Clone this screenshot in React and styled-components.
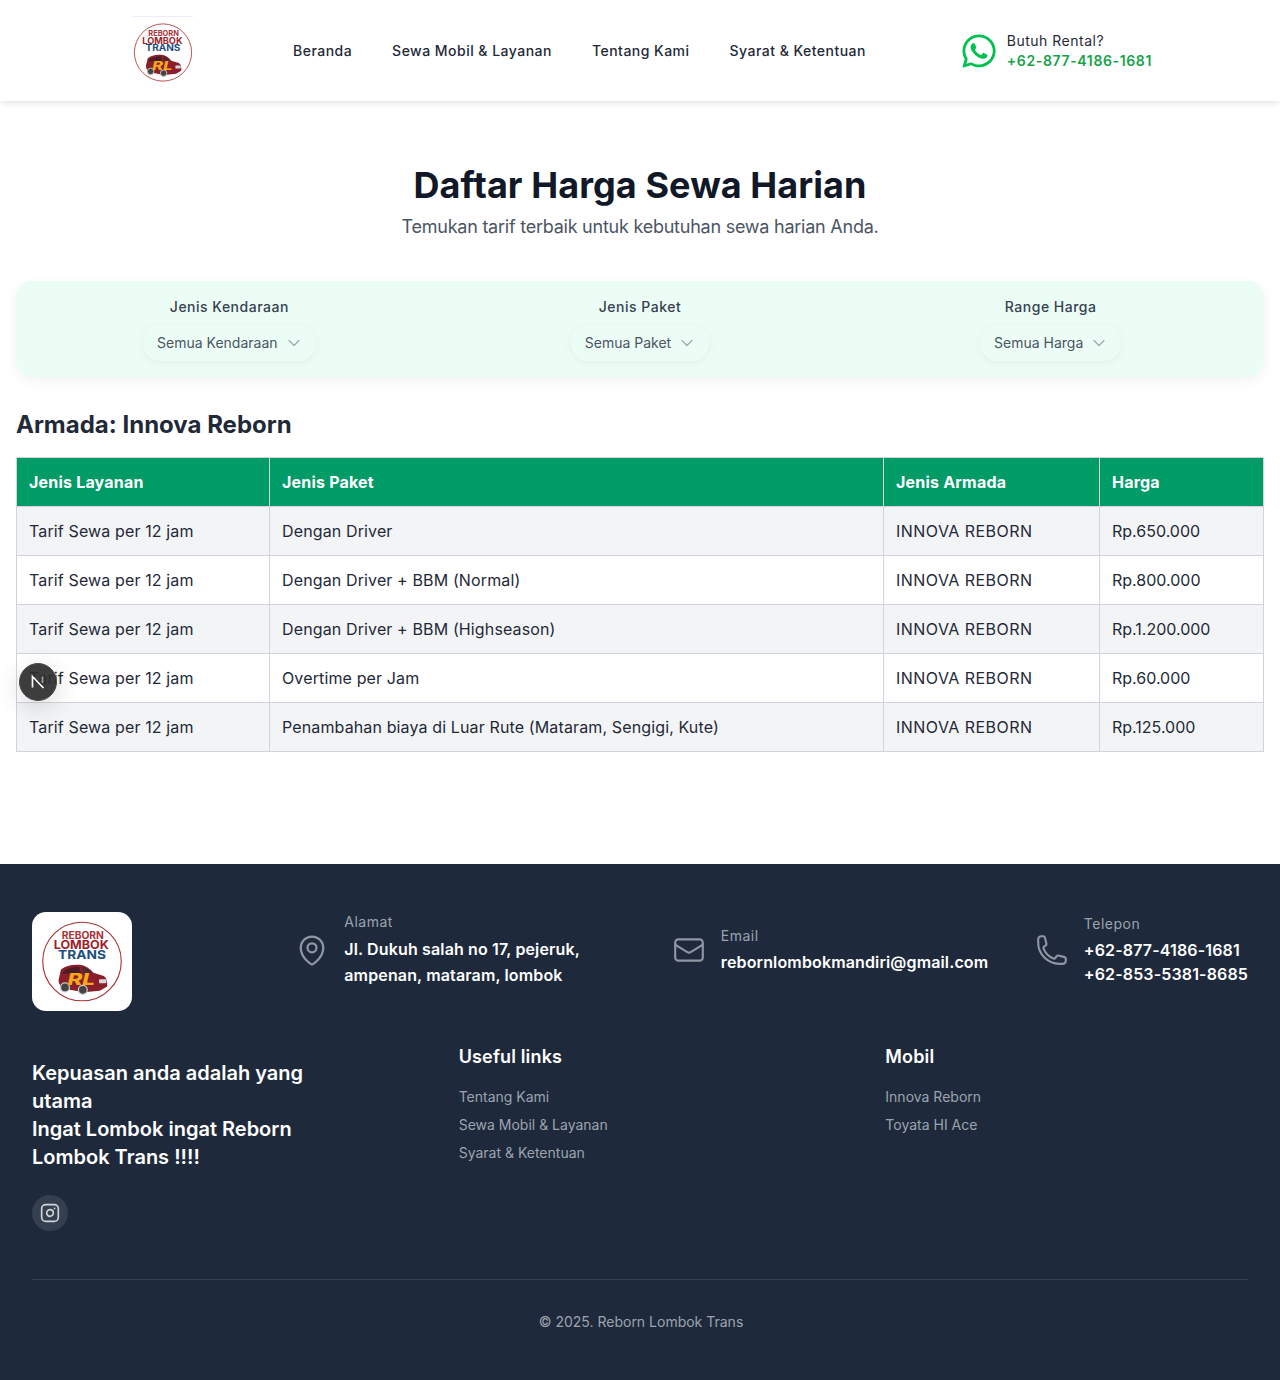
import React from 'react';
import styled, { createGlobalStyle } from 'styled-components';
import { ChevronDown, Instagram } from 'lucide-react';
import { FaWhatsapp } from 'react-icons/fa';
import { HiOutlineMapPin, HiOutlineEnvelope, HiOutlinePhone } from 'react-icons/hi2';

const GlobalStyle = createGlobalStyle`
    * { box-sizing: border-box; }
    body {
        margin: 0;
        font-family: Inter, "Noto Sans", sans-serif;
        background: #fff;
        color: #1f2937;
    }
`;

const Page = styled.div`
    position: relative;
    width: 100%;
`;

// header
const Header = styled.header`
    height: 101px;
    background: #fff;
    box-shadow: 0 4px 6px -1px rgba(0,0,0,.08), 0 2px 4px -2px rgba(0,0,0,.06);
    display: flex;
    align-items: center;
    padding: 0 128px 0 133px;
`;
const HeaderLogo = styled.div`
    width: 60px;
    height: 66px;
    margin-top: -3px;
    border-top: 1px solid #ebebfa;
    padding-top: 6px;
`;
const Nav = styled.nav`
    display: flex;
    gap: 40px;
    margin-left: 100px;
    flex: 1;
`;
const NavLink = styled.a`
    font-size: 14px;
    font-weight: 500;
    letter-spacing: .48px;
    color: #1f2937;
`;
const CallBox = styled.div`
    display: flex;
    align-items: center;
    gap: 9px;
    svg { color: #00c04f; }
`;
const CallText = styled.div`
    display: flex;
    flex-direction: column;
`;
const CallLabel = styled.span`
    font-size: 14px;
    line-height: 20px;
    letter-spacing: .5px;
    color: #1f2937;
`;
const CallNumber = styled.span`
    font-size: 14px;
    line-height: 20px;
    font-weight: 600;
    letter-spacing: .63px;
    color: #16a34a;
`;

// main
const Main = styled.main`
    padding: 64px 16px 112px;
`;
const Title = styled.h1`
    margin: 0;
    text-align: center;
    font-size: 36px;
    line-height: 40px;
    font-weight: 700;
    letter-spacing: .08px;
    color: #111827;
`;
const Subtitle = styled.p`
    margin: 8px 0 0;
    text-align: center;
    font-size: 18px;
    line-height: 28px;
    letter-spacing: -.24px;
    color: #4b5563;
`;
const FilterPanel = styled.section`
    margin-top: 40px;
    height: 96px;
    padding: 16px;
    display: grid;
    grid-template-columns: repeat(3, 1fr);
    gap: 16px;
    background: #ecfdf5;
    border-radius: 16px;
    box-shadow: 0 4px 12px rgba(0,0,0,.05);
`;
const FilterGroup = styled.div`
    display: flex;
    flex-direction: column;
    align-items: center;
`;
const FilterLabel = styled.label`
    font-size: 14px;
    line-height: 20px;
    font-weight: 500;
    letter-spacing: .5px;
    color: #374151;
`;
const FilterSelect = styled.div`
    margin-top: 8px;
    height: 36px;
    padding: 0 12px 1px 14px;
    display: flex;
    align-items: center;
    gap: 6px;
    border-radius: 18px;
    background: #ecfdf5;
    font-size: 14px;
    color: #4b5563;
    box-shadow: 0 2px 8px rgba(0,0,0,.05);
    svg { color: #a3aab5; }
`;
const SectionTitle = styled.h2`
    margin: 32px 0 16px;
    font-size: 24px;
    line-height: 32px;
    font-weight: 700;
    color: #1f2937;
`;
const PriceTable = styled.table`
    width: calc(100% - 1px);
    table-layout: fixed;
    border-collapse: collapse;
    font-size: 16px;
`;
const Th = styled.th`
    height: 49px;
    padding: 0 12px;
    text-align: left;
    font-weight: 700;
    letter-spacing: .2px;
    color: #fff;
    background: #019b68;
    border: 1px solid #d1d5db;
`;
const Td = styled.td`
    height: 49px;
    padding: 0 12px;
    letter-spacing: ${props => props.$spacing ?? .13}px;
    color: #1f2937;
    border: 1px solid #d1d5db;
`;
const Tr = styled.tr`
    background: ${props => props.$shaded ? '#f3f4f6' : '#fff'};
`;

// dev tools badge
const DevBadge = styled.div`
    position: absolute;
    left: 19px;
    top: 663px;
    width: 38px;
    height: 38px;
    display: flex;
    align-items: center;
    justify-content: center;
    border-radius: 50%;
    background: rgba(45,45,45,.92);
    border: 1px solid #4a4a4a;
    box-shadow: 0 6px 24px rgba(0,0,0,.15);
`;

// footer
const Footer = styled.footer`
    height: 516px;
    padding: 48px 32px 0;
    background: #1e2a3b;
`;
const FooterTop = styled.div`
    display: flex;
    align-items: flex-start;
`;
const FooterLogoWrap = styled.div`
    flex: 1;
`;
const FooterLogo = styled.div`
    width: 100px;
    height: 99px;
    padding: 9px;
    background: #fff;
    border-radius: 14px;
`;
const Contacts = styled.div`
    display: flex;
    align-items: center;
    gap: 46.5px;
    height: 76px;
`;
const Contact = styled.div`
    display: flex;
    align-items: center;
    gap: ${props => props.$gap || 15}px;
    svg { color: #8f96a3; flex-shrink: 0; }
`;
const ContactLabel = styled.div`
    font-size: 14px;
    line-height: 20px;
    letter-spacing: .5px;
    color: #9ca3af;
    margin-bottom: ${props => props.$gap || 3}px;
`;
const ContactValue = styled.div`
    width: ${props => props.$width || 'auto'};
    font-size: 16px;
    line-height: ${props => props.$line || 26}px;
    font-weight: 600;
    letter-spacing: .14px;
    color: #fff;
`;
const FooterGrid = styled.div`
    margin-top: 32px;
    display: grid;
    grid-template-columns: repeat(3, 1fr);
    column-gap: 64px;
    height: 237px;
    border-bottom: 1px solid rgba(255,255,255,.1);
`;
const Tagline = styled.p`
    margin: 16px 0 0;
    width: 290px;
    font-size: 20px;
    line-height: 28px;
    font-weight: 600;
    color: #fff;
`;
const SocialLink = styled.a`
    margin-top: 24px;
    width: 36px;
    height: 36px;
    display: flex;
    align-items: center;
    justify-content: center;
    border-radius: 50%;
    background: rgba(255,255,255,.1);
    color: #d1d5db;
`;
const LinkTitle = styled.h4`
    margin: 0 0 12px;
    font-size: 18px;
    line-height: 28px;
    font-weight: 600;
    letter-spacing: .15px;
    color: #fff;
`;
const FooterLink = styled.a`
    display: block;
    font-size: 14px;
    line-height: 28px;
    color: #9ca3af;
`;
const Copyright = styled.p`
    margin: 32px 0 0;
    padding-left: 2px;
    text-align: center;
    font-size: 14px;
    line-height: 20px;
    color: #9ca3af;
`;

const rows = [
    ['Dengan Driver', 'Rp.650.000'],
    ['Dengan Driver + BBM (Normal)', 'Rp.800.000'],
    ['Dengan Driver + BBM (Highseason)', 'Rp.1.200.000'],
    ['Overtime per Jam', 'Rp.60.000'],
    ['Penambahan biaya di Luar Rute (Mataram, Sengigi, Kute)', 'Rp.125.000'],
];

const filters = [
    ['Jenis Kendaraan', 'Semua Kendaraan'],
    ['Jenis Paket', 'Semua Paket'],
    ['Range Harga', 'Semua Harga'],
];

// round company badge, drawn because there is no image file
const Logo = () => (
    <svg viewBox="0 0 100 100" width="100%" height="100%">
        <circle cx="50" cy="50" r="48.5" fill="#fff" stroke="#a83236" strokeWidth="1.4" />
        <g fontFamily="Inter, sans-serif" textAnchor="middle" fontWeight="700">
            <text x="51" y="22.5" fontSize="12.5" textLength="52" lengthAdjust="spacingAndGlyphs" fill="#a8323a">REBORN</text>
            <text x="49" y="35" fontSize="15" textLength="68" lengthAdjust="spacingAndGlyphs" fill="#9e1f2a">LOMBOK</text>
            <text x="50" y="47.5" fontSize="15" textLength="59" lengthAdjust="spacingAndGlyphs" fill="#1d4f80">TRANS</text>
        </g>
        <path d="M21 73 L24 60 Q32 53 47 54 Q57 55 64 64 L77 68 Q82 72 81 81 L72 86 L52 88 L30 84 Q21 81 21 73Z" fill="#8a1f2b" />
        <path d="M28 61 Q37 56 46 56.5 L49 64 L26 65Z" fill="#4a1c24" />
        <path d="M50 56.5 Q57 58 62 64.5 L52 64.5Z" fill="#4a2a30" />
        <rect x="71" y="72" width="9" height="5" rx="1" fill="#d8d8d8" />
        <circle cx="29" cy="82" r="5.5" fill="#444" stroke="#c8c8c8" strokeWidth="1.6" />
        <circle cx="51" cy="85" r="5.5" fill="#444" stroke="#c8c8c8" strokeWidth="1.6" />
        <text x="49" y="79" fontFamily="Inter, sans-serif" fontStyle="italic" fontWeight="800" fontSize="19" textAnchor="middle" textLength="34" lengthAdjust="spacingAndGlyphs" fill="#f6a81c">RL</text>
    </svg>
);

const App = () => {
    return (
        <Page>
            <GlobalStyle />
            <Header>
                <HeaderLogo><Logo /></HeaderLogo>
                <Nav>
                    <NavLink>Beranda</NavLink>
                    <NavLink>Sewa Mobil &amp; Layanan</NavLink>
                    <NavLink>Tentang Kami</NavLink>
                    <NavLink>Syarat &amp; Ketentuan</NavLink>
                </Nav>
                <CallBox>
                    <FaWhatsapp size={38} />
                    <CallText>
                        <CallLabel>Butuh Rental?</CallLabel>
                        <CallNumber>+62-877-4186-1681</CallNumber>
                    </CallText>
                </CallBox>
            </Header>

            <Main>
                <Title>Daftar Harga Sewa Harian</Title>
                <Subtitle>Temukan tarif terbaik untuk kebutuhan sewa harian Anda.</Subtitle>

                <FilterPanel>
                    {filters.map(([label, value]) => (
                        <FilterGroup key={label}>
                            <FilterLabel>{label}</FilterLabel>
                            <FilterSelect>
                                {value}
                                <ChevronDown size={20} strokeWidth={1.5} />
                            </FilterSelect>
                        </FilterGroup>
                    ))}
                </FilterPanel>

                <SectionTitle>Armada: Innova Reborn</SectionTitle>
                <PriceTable>
                    <colgroup>
                        <col style={{ width: 253 }} />
                        <col style={{ width: 614 }} />
                        <col style={{ width: 216 }} />
                        <col style={{ width: 164 }} />
                    </colgroup>
                    <thead>
                        <tr>
                            <Th>Jenis Layanan</Th>
                            <Th>Jenis Paket</Th>
                            <Th>Jenis Armada</Th>
                            <Th>Harga</Th>
                        </tr>
                    </thead>
                    <tbody>
                        {rows.map(([paket, harga], i) => (
                            <Tr key={paket} $shaded={i % 2 === 0}>
                                <Td>Tarif Sewa per 12 jam</Td>
                                <Td>{paket}</Td>
                                <Td $spacing={.45}>INNOVA REBORN</Td>
                                <Td $spacing={0}>{harga}</Td>
                            </Tr>
                        ))}
                    </tbody>
                </PriceTable>
            </Main>

            <DevBadge>
                <svg width="16" height="16" viewBox="0 0 16 16" fill="none" stroke="#fff" strokeWidth="1.7">
                    <path d="M2.5 13.5V2.5L13.5 14" />
                    <path d="M12.5 2.5V9" opacity=".5" />
                </svg>
            </DevBadge>

            <Footer>
                <FooterTop>
                    <FooterLogoWrap>
                        <FooterLogo><Logo /></FooterLogo>
                    </FooterLogoWrap>
                    <Contacts>
                        <Contact $gap={14}>
                            <HiOutlineMapPin size={36} />
                            <div>
                                <ContactLabel $gap={4}>Alamat</ContactLabel>
                                <ContactValue $width="281px">Jl. Dukuh salah no 17, pejeruk, ampenan, mataram, lombok</ContactValue>
                            </div>
                        </Contact>
                        <Contact>
                            <HiOutlineEnvelope size={34} />
                            <div>
                                <ContactLabel>Email</ContactLabel>
                                <ContactValue>rebornlombokmandiri@gmail.com</ContactValue>
                            </div>
                        </Contact>
                        <Contact>
                            <HiOutlinePhone size={34} />
                            <div>
                                <ContactLabel $gap={4}>Telepon</ContactLabel>
                                <ContactValue $line={24}>+62-877-4186-1681<br />+62-853-5381-8685</ContactValue>
                            </div>
                        </Contact>
                    </Contacts>
                </FooterTop>

                <FooterGrid>
                    <div>
                        <Tagline>Kepuasan anda adalah yang utama<br />Ingat Lombok ingat Reborn Lombok Trans !!!!</Tagline>
                        <SocialLink><Instagram size={20} /></SocialLink>
                    </div>
                    <div>
                        <LinkTitle>Useful links</LinkTitle>
                        <FooterLink>Tentang Kami</FooterLink>
                        <FooterLink>Sewa Mobil &amp; Layanan</FooterLink>
                        <FooterLink>Syarat &amp; Ketentuan</FooterLink>
                    </div>
                    <div>
                        <LinkTitle>Mobil</LinkTitle>
                        <FooterLink>Innova Reborn</FooterLink>
                        <FooterLink>Toyata HI Ace</FooterLink>
                    </div>
                </FooterGrid>
                <Copyright>© 2025. Reborn Lombok Trans</Copyright>
            </Footer>
        </Page>
    );
};

export default App;
